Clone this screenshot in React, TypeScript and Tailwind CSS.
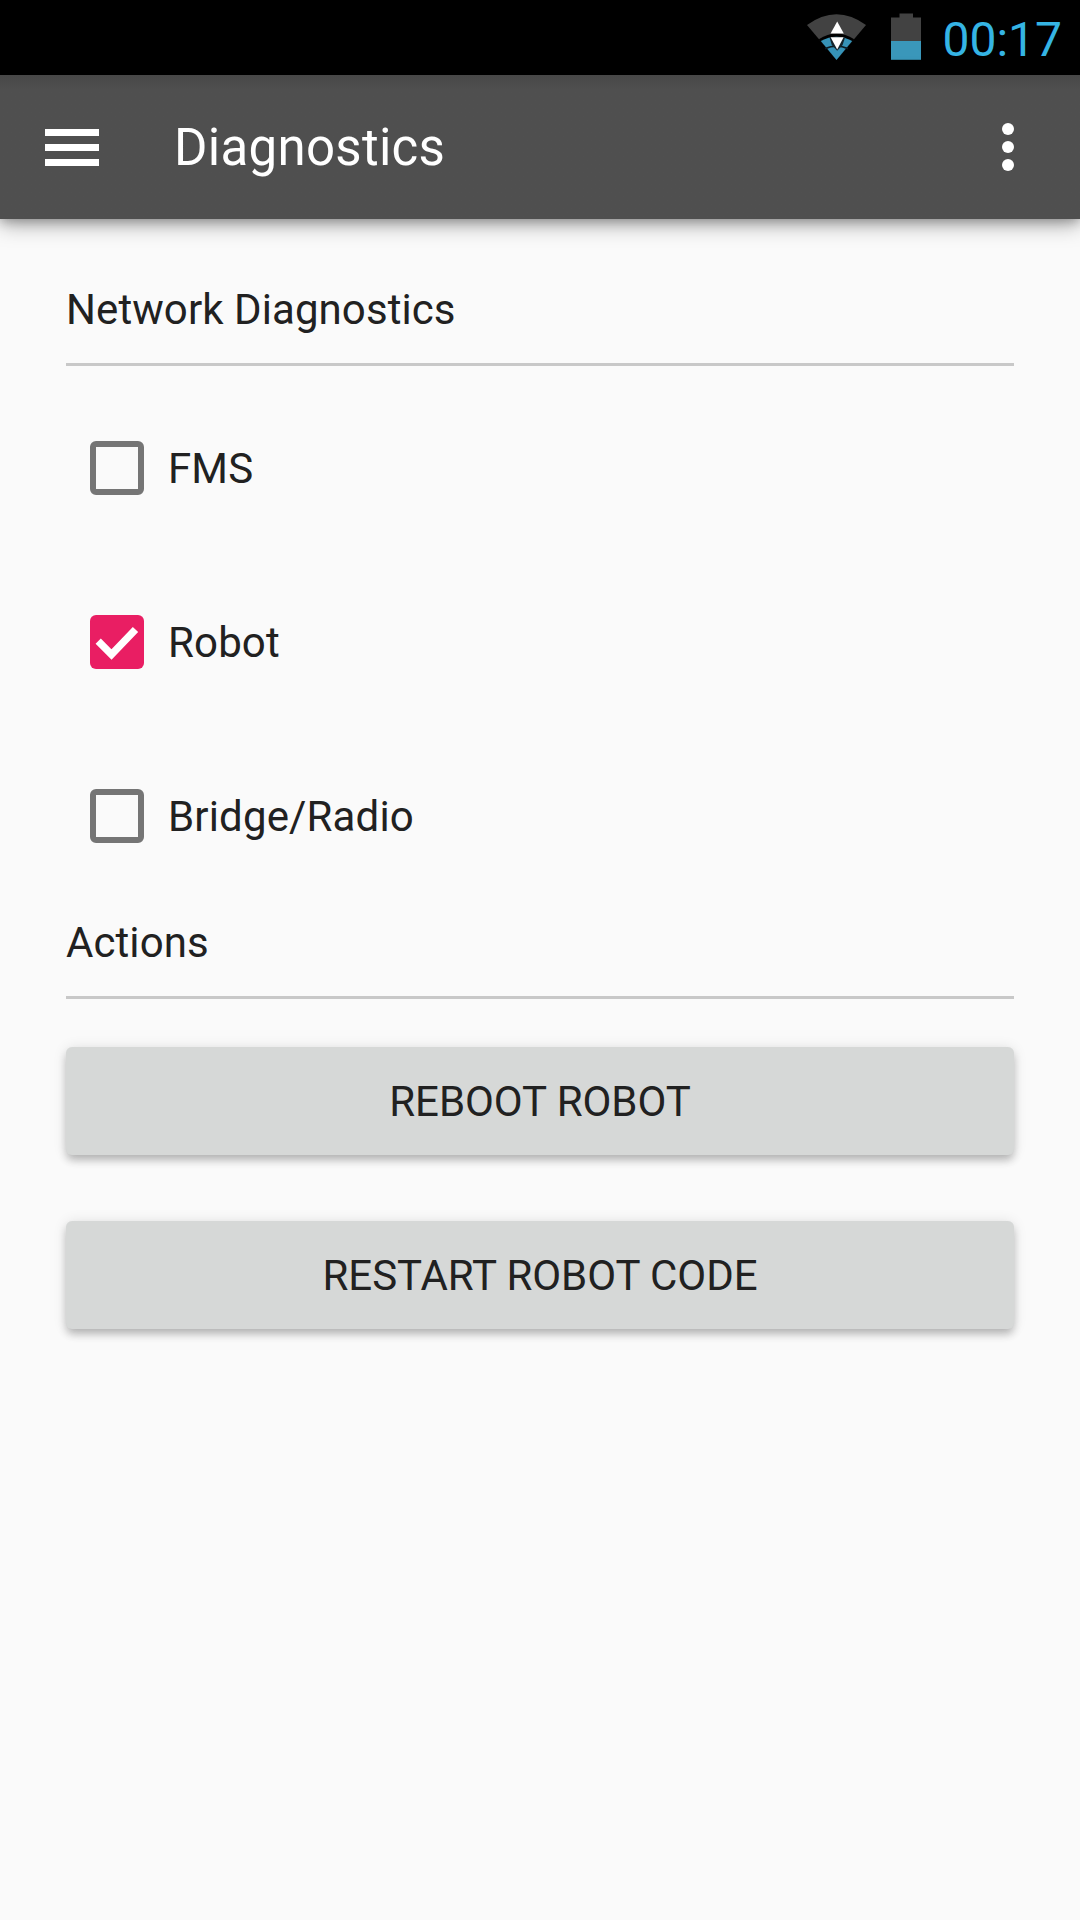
import React from "react";

function WifiIcon() {
  return (
    <svg className="h-[50px] w-[62px]" viewBox="0 0 62 50" fill="none">
      <path d="M1 13 Q30.5 -8.5 60 13 L30.5 48 Z" fill="#424242" />
      <path d="M12.8 27.2 Q30.5 16 48.2 27.2 L30.5 48 Z" fill="#000" />
      <path d="M14.8 29 Q30.5 20.5 46.2 29 L30.5 48 Z" fill="#3693b8" />
      <path d="M19 36.6 Q30.5 31.5 42 36.6" stroke="#0c1c24" strokeWidth="1.8" />
      <path d="M23.4 25 H39.2 L36.6 33 L31.2 38.8 L25.8 33 Z" fill="#14242c" />
      <path d="M31.2 9.6 L37.8 21.6 H24.6 Z" fill="#fff" />
      <path d="M24.6 25.2 H37.6 L31.2 37.6 Z" fill="#fff" />
    </svg>
  );
}

function BatteryIcon() {
  return (
    <svg className="h-[47px] w-[30px]" viewBox="0 0 30 47">
      <path d="M8.5 0.5 H22 V4.5 H30 V28 H0 V4.5 H8.5 Z" fill="#424242" />
      <rect y="28" width="30" height="18.8" fill="#3a97ba" />
    </svg>
  );
}

function StatusBar() {
  return (
    <div className="flex h-[75px] items-start justify-end bg-black pr-[18px]">
      <div className="mt-3 mr-[23px]">
        <WifiIcon />
      </div>
      <div className="mt-[13px] mr-[21px]">
        <BatteryIcon />
      </div>
      <span className="mt-[10px] text-[48px] leading-[60px] text-[#35b4e4]">00:17</span>
    </div>
  );
}

function AppBar() {
  return (
    <header className="relative flex h-36 items-center bg-[#4f4f4f] bg-linear-to-b from-[#484848] to-[#4f4f4f] to-10% shadow-[0_5px_20px_rgba(0,0,0,0.36),0_2px_10px_rgba(0,0,0,0.22)]">
      <button className="ml-[45px] flex w-[54px] flex-col gap-2" aria-label="Open menu">
        <span className="h-[7px] bg-white" />
        <span className="h-[7px] bg-white" />
        <span className="h-[7px] bg-white" />
      </button>
      <h1 className="ml-[75px] flex-1 pt-[2px] text-[51px] leading-[60px] tracking-[0.3px] text-white">Diagnostics</h1>
      <button className="mr-[66px] flex flex-col gap-[6px]" aria-label="More options">
        <span className="size-3 rounded-full bg-white" />
        <span className="size-3 rounded-full bg-white" />
        <span className="size-3 rounded-full bg-white" />
      </button>
    </header>
  );
}

function SectionTitle({ children }: { children: string }) {
  return (
    <h2 className="h-[81px] border-b-3 border-[#c8c8c8] pt-px text-[42px] leading-12 tracking-[0.08px]">
      {children}
    </h2>
  );
}

function CheckRow({ label, checked = false }: { label: string; checked?: boolean }) {
  return (
    <label className="flex h-[174px] items-center pl-6">
      {checked ? (
        <span className="size-[54px] rounded-md bg-[#e91e63]">
          <svg className="size-[54px]" viewBox="0 0 54 54" fill="none">
            <path d="M8.2 26.2 L21.5 39.5 L45.5 14.5" stroke="#fff" strokeWidth="7.4" />
          </svg>
        </span>
      ) : (
        <span className="size-[54px] rounded-md border-6 border-[#757575]" />
      )}
      <span className="ml-6 pt-[2px] text-[42px] leading-12 tracking-[0.15px]">{label}</span>
    </label>
  );
}

function ActionButton({ children }: { children: string }) {
  return (
    <button className="flex h-[108px] items-center justify-center rounded-md bg-[#d6d8d7] pt-[2px] text-[42px] leading-12 tracking-[-0.06px] shadow-[0_6px_9px_-1px_rgba(0,0,0,0.24),0_1px_14px_rgba(0,0,0,0.11)]">
      {children}
    </button>
  );
}

export default function App() {
  return (
    <div className="flex h-[1920px] w-[1080px] flex-col bg-[#fafafa] font-['Roboto',sans-serif] text-[#212121]">
      <StatusBar />
      <AppBar />
      <main className="flex flex-col px-[66px] pt-[66px]">
        <SectionTitle>Network Diagnostics</SectionTitle>
        <div className="flex flex-col pt-[15px]">
          <CheckRow label="FMS" />
          <CheckRow label="Robot" checked />
          <CheckRow label="Bridge/Radio" />
        </div>
        <div className="mt-[15px]">
          <SectionTitle>Actions</SectionTitle>
        </div>
        <div className="flex flex-col gap-[66px] pt-12">
          <ActionButton>REBOOT ROBOT</ActionButton>
          <ActionButton>RESTART ROBOT CODE</ActionButton>
        </div>
      </main>
    </div>
  );
}
